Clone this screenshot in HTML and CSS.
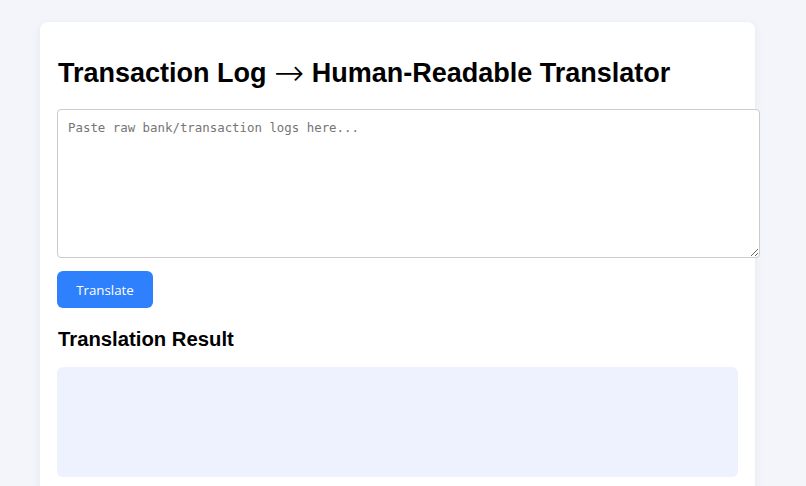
FILE: index.html
```html
<!DOCTYPE html>
<html>
<head>
<meta charset="utf-8">
<link rel="stylesheet" href="styles.css">
</head>
<body>
<div class="card">
  <h1 class="title">Transaction Log <span class="arrow">→</span> Human-Readable Translator</h1>
  <textarea class="input" placeholder="Paste raw bank/transaction logs here..."></textarea>
  <button class="btn">Translate</button>
  <h2 class="subtitle">Translation Result</h2>
  <div class="result"></div>
</div>
</body>
</html>
```
FILE: styles.css
```css
html, body {
  margin: 0;
  padding: 0;
  background: #f4f5fa;
  font-family: "Liberation Sans", Arial, sans-serif;
}
body {
  padding: 22px 0 0 40px;
}
.card {
  width: 681px;
  background: #ffffff;
  border-radius: 8px;
  padding: 14px 17px 24px 17px;
  box-shadow: 0 2px 10px rgba(0, 0, 0, 0.06);
}
.title {
  font-size: 27px;
  font-weight: bold;
  color: #000;
  margin: 21px 0 20px 1px;
  line-height: 32px;
  height: 32px;
}
.arrow {
  font-family: "DejaVu Sans", sans-serif;
  font-weight: 200;
  font-size: 36px;
  line-height: 0;
  vertical-align: -3px;
}
.input {
  display: block;
  width: 681px;
  height: 127px;
  padding: 10px;
  border: 1px solid #cccccc;
  border-radius: 4px;
  font-family: "DejaVu Sans Mono", monospace;
  font-size: 12.4px;
  margin: 0;
  resize: vertical;
}
.input::placeholder {
  color: #757575;
}
.btn {
  display: block;
  margin-top: 13px;
  width: 96px;
  height: 37px;
  background: #2f80fc;
  color: #fff;
  border: none;
  border-radius: 6px;
  font-family: "Open Sans", sans-serif;
  font-size: 13.3px;
}
.subtitle {
  font-size: 20.3px;
  font-weight: bold;
  margin: 19px 0 16px 1px;
  line-height: 24px;
}
.result {
  height: 110px;
  background: #eef2fe;
  border-radius: 6px;
}
```
